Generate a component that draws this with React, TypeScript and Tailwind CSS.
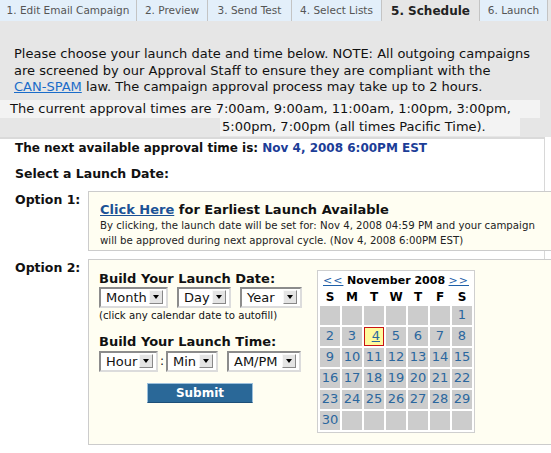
import React from "react";

const tabs = [
  { label: "1. Edit Email Campaign", w: "w-[137px]" },
  { label: "2. Preview", w: "w-[71px]" },
  { label: "3. Send Test", w: "w-[84px]" },
  { label: "4. Select Lists", w: "w-[90px]" },
  { label: "5. Schedule", w: "w-[98px]", active: true },
  { label: "6. Launch", w: "w-[68px]" },
];

const Select = ({ label, w }: { label: string; w: string }) => (
  <div
    className={`${w} h-[21px] flex items-center justify-between bg-white border-2 border-t-[#8c8c8c] border-l-[#8c8c8c] border-r-[#dcdcdc] border-b-[#dcdcdc] pl-[5px] pr-[3px] font-normal`}
  >
    <span className="text-[13px] leading-none text-[#111]">{label}</span>
    <span className="w-[14px] h-[14px] flex items-center justify-center bg-[#e4e4e4] border border-t-[#f8f8f8] border-l-[#f8f8f8] border-r-[#888] border-b-[#888]">
      <span className="w-0 h-0 border-l-[3.5px] border-r-[3.5px] border-t-[4px] border-l-transparent border-r-transparent border-t-black" />
    </span>
  </div>
);

const days: (number | null)[] = [
  null, null, null, null, null, null, 1,
  2, 3, 4, 5, 6, 7, 8,
  9, 10, 11, 12, 13, 14, 15,
  16, 17, 18, 19, 20, 21, 22,
  23, 24, 25, 26, 27, 28, 29,
  30, null, null, null, null, null, null,
];

const Calendar = () => (
  <div className="w-[158px] bg-white border border-[#cfcfcf] px-[2px] pt-[2px] pb-[2px]">
    <div className="flex items-center justify-between px-[3px] h-[15px] text-[11px] leading-none whitespace-nowrap">
      <span className="text-[#1f5fa8] underline font-normal tracking-[1px]">&lt;&lt;</span>
      <span className="font-bold text-black">November 2008</span>
      <span className="text-[#1f5fa8] underline font-normal tracking-[1px]">&gt;&gt;</span>
    </div>
    <div className="grid grid-cols-[repeat(7,20px)] gap-x-[2px] h-[18px] items-center text-[12px] font-bold text-black text-center">
      {["S", "M", "T", "W", "T", "F", "S"].map((d, i) => (
        <span key={i}>{d}</span>
      ))}
    </div>
    <div className="grid grid-cols-[repeat(7,20px)] auto-rows-[19px] gap-x-[2px] gap-y-[2px] text-[13px] font-normal text-[#2b679e]">
      {days.map((d, i) =>
        d === 4 ? (
          <div key={i} className="bg-[#fffa9c] border border-[#c81414] flex items-center justify-end pr-[3px] underline">
            {d}
          </div>
        ) : (
          <div key={i} className="bg-[#cccccc] flex items-center justify-center">
            {d ?? ""}
          </div>
        )
      )}
    </div>
  </div>
);

export default function App() {
  return (
    <div className="w-[551px] h-[453px] overflow-hidden bg-white text-[#111] font-['DejaVu_Sans',Verdana,sans-serif]">
      {/* Tabs */}
      <div className="flex h-[21px] bg-[#e6e6e6]">
        {tabs.map((t) => (
          <div
            key={t.label}
            className={`${t.w} flex items-center justify-center border-r border-[#c4c4c4] ${
              t.active ? "bg-[#e6e6e6] text-[12px] font-bold text-[#222]" : "bg-[#e3effa] text-[10.5px] text-[#555]"
            }`}
          >
            {t.label}
          </div>
        ))}
      </div>

      {/* Notice */}
      <div className="bg-[#e6e6e6] pt-[25px] pb-[1px]">
        <p className="px-[14px] text-[13px] leading-[16.5px] text-[#111] whitespace-nowrap">
          Please choose your launch date and time below. NOTE: All outgoing campaigns
          <br />
          are screened by our Approval Staff to ensure they are compliant with the
          <br />
          <span className="text-[#1a6cc9] underline">CAN-SPAM</span> law. The campaign approval process may take up to 2
          hours.
        </p>
        <div className="mt-[4px] text-[13px] leading-[18px] whitespace-nowrap">
          <div className="w-[540px] bg-[#f3f3f3] pl-[10px]">
            The current approval times are 7:00am, 9:00am, 11:00am, 1:00pm, 3:00pm,
          </div>
          <div className="ml-[220px] w-[300px] bg-[#f3f3f3] pl-[2px]">5:00pm, 7:00pm (all times Pacific Time).</div>
        </div>
      </div>

      {/* Main */}
      <div className="border-t-2 border-[#dadada] border-r border-r-[#d8d8d8] w-[545px] pt-[1px] text-[12.5px] font-bold">
        <div className="px-[15px] leading-[16px] text-[12px]">
          The next available approval time is: <span className="text-[#1c3d97]">Nov 4, 2008 6:00PM EST</span>
        </div>
        <div className="px-[15px] mt-[10px] leading-[16px]">Select a Launch Date:</div>

        <div className="flex mt-[9px]">
          <div className="w-[88px] pl-[15px] pt-[1px] leading-[16px]">Option 1:</div>
          <div className="flex-1 mr-[-10px] h-[60px] bg-[#fffef2] border border-[#cccccc] pl-[11px] pt-[10px]">
            <div className="text-[13px] leading-[16px]">
              <span className="text-[#1b5296] underline">Click Here</span> for Earliest Launch Available
            </div>
            <div className="text-[10.2px] leading-[15px] font-normal text-[#222] whitespace-nowrap">
              By clicking, the launch date will be set for: Nov 4, 2008 04:59 PM and your campaign
              <br />
              will be approved during next approval cycle. (Nov 4, 2008 6:00PM EST)
            </div>
          </div>
        </div>

        <div className="flex mt-[8px]">
          <div className="w-[88px] pl-[15px] pt-[1px] leading-[16px]">Option 2:</div>
          <div className="flex-1 mr-[-10px] h-[186px] bg-[#fffef2] border border-[#cccccc] flex">
            <div className="w-[216px] pl-[10px] pt-[11px]">
              <div className="text-[13px] leading-[16px]">Build Your Launch Date:</div>
              <div className="flex gap-[9px]">
                <Select label="Month" w="w-[69px]" />
                <Select label="Day" w="w-[54px]" />
                <Select label="Year" w="w-[62px]" />
              </div>
              <div className="text-[10.2px] leading-[14px] font-normal mt-[1px]">(click any calendar date to autofill)</div>
              <div className="text-[13px] leading-[16px] mt-[11px]">Build Your Launch Time:</div>
              <div className="flex items-center mt-[1px]">
                <Select label="Hour" w="w-[59px]" />
                <span className="w-[8px] text-center font-normal text-[12px]">:</span>
                <Select label="Min" w="w-[52px]" />
                <span className="w-[9px]" />
                <Select label="AM/PM" w="w-[74px]" />
              </div>
              <div className="flex mt-[11px] pl-[48px]">
                <div className="w-[106px] h-[20px] flex items-center justify-center bg-[#2a6898] border border-[#9cc0dc] border-b-[#1d4f78] text-white text-[12px]">
                  Submit
                </div>
              </div>
            </div>
            <div className="pl-[12px] pt-[10px]">
              <Calendar />
            </div>
          </div>
        </div>
      </div>
    </div>
  );
}
